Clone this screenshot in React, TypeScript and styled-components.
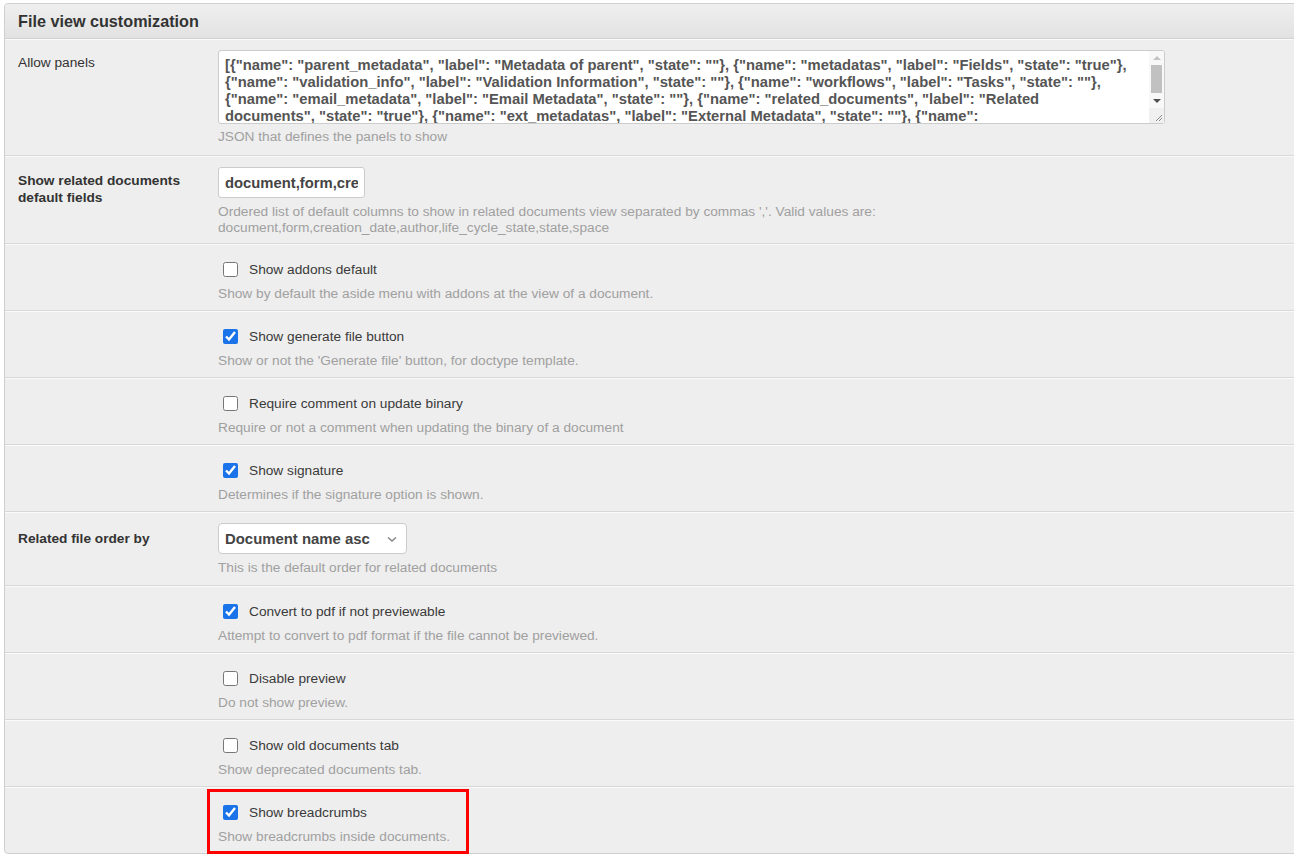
import React from "react";
import styled, { createGlobalStyle } from "styled-components";

const GlobalStyle = createGlobalStyle`
  html, body { margin: 0; padding: 0; background: #fff; overflow: hidden; }
  body { font-family: "Liberation Sans", Arial, sans-serif; font-size: 13.7px; color: #333; }
  * { box-sizing: border-box; }
`;

const Page = styled.div`
  padding: 3px 0 0 4px;
  width: 1320px;
`;

const Panel = styled.section`
  border: 1px solid #cfcfcf;
  border-radius: 4px;
  background: #eeeeee;
`;

const Heading = styled.h3`
  margin: 0;
  height: 35px;
  padding: 0 13px;
  display: flex;
  align-items: center;
  font-size: 16.2px;
  font-weight: bold;
  color: #333;
  border-radius: 3px 3px 0 0;
  background: linear-gradient(#efefef, #e2e2e2);
  border-bottom: 1px solid #d2d2d2;
`;

const Row = styled.div<{ $bottom?: number }>`
  display: grid;
  grid-template-columns: 213px 1fr;
  padding: 11px 0 ${(p) => p.$bottom ?? 7}px;
  border-bottom: 1px solid #d8d8d8;
  box-shadow: inset 0 1px 0 #fafafa;
  &:last-child { border-bottom: none; }
`;

const Label = styled.div<{ $bold?: boolean; $top?: number }>`
  padding: ${(p) => p.$top ?? 6}px 0 0 13px;
  width: 195px;
  font-weight: ${(p) => (p.$bold ? "bold" : "normal")};
  line-height: 17px;
  color: #333;
`;

const Control = styled.div`
  display: flex;
  flex-direction: column;
  align-items: flex-start;
  position: relative;
`;

const TextAreaWrap = styled.div`
  position: relative;
  width: 947px;
  height: 74px;
`;

const TextArea = styled.textarea`
  display: block;
  width: 100%;
  height: 100%;
  padding: 6px 36px 6px 6px;
  border: 1px solid #cccccc;
  border-radius: 3px;
  background: #fff;
  font-family: "Liberation Sans", Arial, sans-serif;
  font-size: 14.77px;
  font-weight: bold;
  line-height: 17px;
  color: #555;
  resize: none;
  overflow: hidden;
  outline: none;
`;

const ScrollBar = styled.div`
  position: absolute;
  top: 1px;
  right: 1px;
  bottom: 1px;
  width: 15px;
  display: flex;
  flex-direction: column;
  background: #f8f8f8;
  border-radius: 0 2px 2px 0;
`;

const ArrowButton = styled.div<{ $dir: "up" | "down" }>`
  height: 14px;
  display: flex;
  align-items: center;
  justify-content: center;
  &::before {
    content: "";
    width: 0;
    height: 0;
    border-left: 4px solid transparent;
    border-right: 4px solid transparent;
    ${(p) =>
      p.$dir === "up"
        ? "border-bottom: 4px solid #c4c4c4;"
        : "border-top: 4px solid #505050;"}
  }
`;

const Track = styled.div`
  flex: 1;
  padding: 0 2px;
`;

const Thumb = styled.div`
  height: 28px;
  background: #c1c1c1;
`;

const Resizer = styled.div`
  height: 15px;
  background: #f0f0f0;
  display: flex;
  align-items: flex-end;
  justify-content: flex-end;
`;

const TextInput = styled.input`
  width: 147px;
  height: 31px;
  padding: 0 6px;
  border: 1px solid #cccccc;
  border-radius: 3px;
  background: #fff;
  font-family: "Liberation Sans", Arial, sans-serif;
  font-size: 14.8px;
  font-weight: bold;
  color: #444;
  outline: none;
`;

const SelectWrap = styled.div`
  position: relative;
  width: 189px;
  height: 31px;
`;

const Select = styled.select`
  appearance: none;
  width: 100%;
  height: 100%;
  padding: 0 30px 0 6px;
  border: 1px solid #cccccc;
  border-radius: 4px;
  background: #fff;
  font-family: "Liberation Sans", Arial, sans-serif;
  font-size: 14.9px;
  font-weight: bold;
  color: #444;
  outline: none;
`;

const Chevron = styled.svg`
  position: absolute;
  right: 10px;
  top: 13px;
  pointer-events: none;
`;

const Help = styled.p<{ $gap?: number; $after?: number }>`
  margin: ${(p) => p.$gap ?? 7}px 0 ${(p) => p.$after ?? 0}px;
  font-size: 13.7px;
  line-height: 16px;
  color: #a0a0a0;
`;

const CheckLine = styled.label`
  display: flex;
  align-items: center;
  height: 20px;
  margin-top: 4px;
  font-size: 13.7px;
  color: #3a3a3a;
`;

const Check = styled.input`
  width: 15px;
  height: 15px;
  margin: 0 11px 0 5px;
  accent-color: #1a73e8;
`;

const Highlight = styled.div`
  position: absolute;
  left: -11px;
  top: -9px;
  width: 262px;
  height: 65px;
  border: 3px solid #ff0000;
  pointer-events: none;
`;

const panelsJson =
  '[{"name": "parent_metadata", "label": "Metadata of parent", "state": ""}, {"name": "metadatas", "label": "Fields", "state": "true"}, {"name": "validation_info", "label": "Validation Information", "state": ""}, {"name": "workflows", "label": "Tasks", "state": ""}, {"name": "email_metadata", "label": "Email Metadata", "state": ""}, {"name": "related_documents", "label": "Related documents", "state": "true"}, {"name": "ext_metadatas", "label": "External Metadata", "state": ""}, {"name": "related_workflows", "label": "Related workflows", "state": ""}, {"name": "history", "label": "History", "state": ""}]';

type CheckRow = { label: string; help: string; checked: boolean; highlight?: boolean };

const firstChecks: CheckRow[] = [
  { label: "Show addons default", help: "Show by default the aside menu with addons at the view of a document.", checked: false },
  { label: "Show generate file button", help: "Show or not the 'Generate file' button, for doctype template.", checked: true },
  { label: "Require comment on update binary", help: "Require or not a comment when updating the binary of a document", checked: false },
  { label: "Show signature", help: "Determines if the signature option is shown.", checked: true },
];

const secondChecks: CheckRow[] = [
  { label: "Convert to pdf if not previewable", help: "Attempt to convert to pdf format if the file cannot be previewed.", checked: true },
  { label: "Disable preview", help: "Do not show preview.", checked: false },
  { label: "Show old documents tab", help: "Show deprecated documents tab.", checked: false },
  { label: "Show breadcrumbs", help: "Show breadcrumbs inside documents.", checked: true, highlight: true },
];

function CheckboxRow({ item }: { item: CheckRow }) {
  return (
    <Row $bottom={8}>
      <Label />
      <Control>
        <CheckLine>
          <Check type="checkbox" defaultChecked={item.checked} />
          {item.label}
        </CheckLine>
        <Help>{item.help}</Help>
        {item.highlight && <Highlight />}
      </Control>
    </Row>
  );
}

export default function App() {
  return (
    <Page>
      <GlobalStyle />
      <Panel>
        <Heading>File view customization</Heading>
        <Row $bottom={10}>
          <Label $top={4}>Allow panels</Label>
          <Control>
            <TextAreaWrap>
              <TextArea defaultValue={panelsJson} spellCheck={false} />
              <ScrollBar>
                <ArrowButton $dir="up" />
                <Track>
                  <Thumb />
                </Track>
                <ArrowButton $dir="down" />
                <Resizer>
                  <svg width="15" height="15" viewBox="0 0 15 15">
                    <path d="M13 7 L7 13 M13 10 L10 13" stroke="#8a8a8a" strokeWidth="1" fill="none" />
                  </svg>
                </Resizer>
              </ScrollBar>
            </TextAreaWrap>
            <Help $gap={5}>JSON that defines the panels to show</Help>
          </Control>
        </Row>
        <Row>
          <Label $bold $top={5}>Show related documents default fields</Label>
          <Control>
            <TextInput defaultValue="document,form,creation_date,author,life_cycle_state,state,space" />
            <Help $gap={6}>
              Ordered list of default columns to show in related documents view separated by commas ','. Valid values are:
              <br />
              document,form,creation_date,author,life_cycle_state,state,space
            </Help>
          </Control>
        </Row>
        {firstChecks.map((c) => (
          <CheckboxRow key={c.label} item={c} />
        ))}
        <Row $bottom={9}>
          <Label $bold $top={7}>Related file order by</Label>
          <Control>
            <SelectWrap>
              <Select defaultValue="name_asc">
                <option value="name_asc">Document name asc</option>
                <option value="name_desc">Document name desc</option>
              </Select>
              <Chevron width="10" height="7" viewBox="0 0 10 7">
                <path d="M1 1.5 L5 5 L9 1.5" fill="none" stroke="#888" strokeWidth="1.6" />
              </Chevron>
            </SelectWrap>
            <Help $gap={6}>This is the default order for related documents</Help>
          </Control>
        </Row>
        {secondChecks.map((c) => (
          <CheckboxRow key={c.label} item={c} />
        ))}
      </Panel>
    </Page>
  );
}
